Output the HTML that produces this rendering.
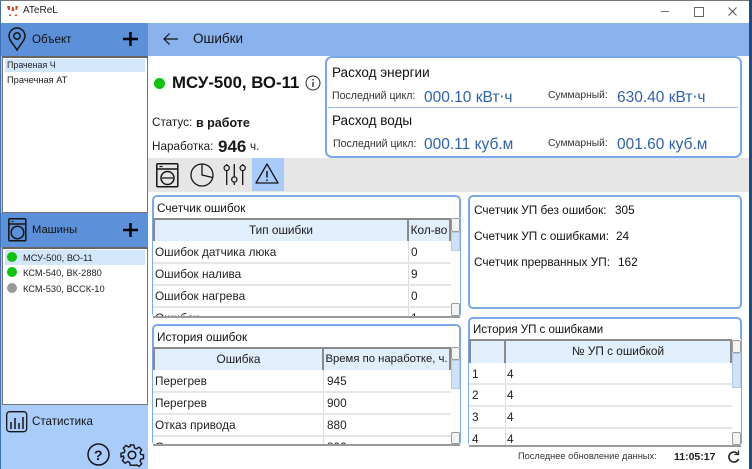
<!DOCTYPE html>
<html><head><meta charset="utf-8"><style>
html,body{margin:0;padding:0;width:752px;height:469px;overflow:hidden;background:#fff}
body{position:relative;font-family:"Liberation Sans",sans-serif;color:#1a1a1a}
.a{position:absolute}
.t{position:absolute;white-space:nowrap;line-height:1}
.box{position:absolute;box-sizing:border-box;border:2px solid #7ba8ea;border-radius:5px;background:#fff}
.th{position:absolute;box-sizing:border-box;background:#e1eefc;border-top:2px solid #8a8a8a;border-right:2px solid #8a8a8a;text-align:center;font-size:11.800px;line-height:21px;white-space:nowrap}
.hl{position:absolute;height:2px;background:#e6e6e6}
.vl{position:absolute;width:1px;background:#dcdcdc}
.c{position:absolute;font-size:11.800px;line-height:1;white-space:nowrap;color:#222}
.sb{position:absolute;width:9px;box-sizing:border-box;border:1px solid #9a9a9a;border-radius:2px;background:#f4f4f4}
.sbt{position:absolute;width:9px;background:#cfe2fa;border:1px solid #b5c9e0;box-sizing:border-box}
.blue{color:#2f62ad;font-size:15.500px}
.lab{font-size:10.600px;color:#333}
.l{font-size:11.800px;color:#111}
.m{font-size:9.300px;color:#222}
.h{font-size:11.600px;color:#111}
svg{position:absolute;overflow:visible}
</style></head><body>
<div class="a" style="left:0;top:0;width:752px;height:1px;background:#777"></div>
<div class="a" style="left:0;top:0;width:1px;height:469px;background:#3f6fb5"></div>
<div class="a" style="right:0;top:0;width:3px;height:469px;background:#1f4a85"></div>
<!-- title bar -->
<svg style="left:7px;top:5px" width="12" height="12"><path d="M0 1h3v4H1zM8.500 1H11l-1 4H8.500zM5 2h1.500l1 4h-3zM2 9.500h2V11H2zM8 9.500h2V11H8z" fill="#d5492a"/></svg>
<div class="t" style="left:23px;top:6px;font-size:10px;color:#222">ATeReL</div>
<div class="a" style="left:661px;top:11px;width:8px;height:1px;background:#777"></div>
<div class="a" style="left:694px;top:7px;width:8px;height:8px;border:1px solid #666"></div>
<svg style="left:728px;top:7px" width="9" height="9"><path d="M.5.5l8 8M8.500.5l-8 8" stroke="#555" stroke-width="1"/></svg>
<!-- headers -->
<div class="a" style="left:1px;top:23px;width:147px;height:33px;background:#5c90d8"></div>
<div class="a" style="left:148px;top:23px;width:601px;height:33px;background:#8ab3ee"></div>
<svg style="left:8px;top:28px" width="18" height="23" fill="none" stroke="#151515" stroke-width="1.500"><path d="M9 22C5.500 16 1 12.500 1 8a8 8 0 0 1 16 0c0 4.500-4.500 8-8 14z"/><circle cx="9" cy="8" r="3.200"/></svg>
<div class="t h" style="left:32px;top:34px">Объект</div>
<svg style="left:123px;top:32px" width="16" height="15"><path d="M7.500 0v14M0 7h15" stroke="#000" stroke-width="2.500"/></svg>
<svg style="left:163px;top:32px" width="16" height="14" fill="none" stroke="#111" stroke-width="1.200"><path d="M1 7h14M6.500 1.500L1 7l5.500 5.500"/></svg>
<div class="t" style="left:193px;top:32px;font-size:13.500px;color:#111">Ошибки</div>
<!-- left sidebar -->
<div class="a" style="left:1px;top:56px;width:147px;height:413px;background:#aaccfb"></div>
<div class="a" style="box-sizing:border-box;left:2px;top:56px;width:146px;height:157px;background:#fff;border:1px solid #777;border-top:2px solid #666"></div>
<div class="a" style="left:5px;top:59px;width:140px;height:13px;background:#d2e6fc"></div>
<div class="t m" style="left:7px;top:61px;font-size:8.900px">Праченая Ч</div>
<div class="t m" style="left:7px;top:76px">Прачечная АТ</div>
<div class="a" style="left:1px;top:213px;width:147px;height:34px;background:#5c90d8"></div>
<svg style="left:8px;top:218px" width="19" height="24" fill="none" stroke="#151515" stroke-width="1.500"><rect x=".8" y=".8" width="17" height="22" rx="1"/><path d="M1 6h17"/><circle cx="9.500" cy="14.500" r="6.300"/><path d="M3.500 3.500h2" stroke-width="1"/></svg>
<div class="t h" style="left:32px;top:225px;font-size:11.200px">Машины</div>
<svg style="left:123px;top:223px" width="16" height="15"><path d="M7.500 0v14M0 7h15" stroke="#000" stroke-width="2.500"/></svg>
<div class="a" style="box-sizing:border-box;left:2px;top:247px;width:146px;height:158px;background:#fff;border:1px solid #777;border-top:2px solid #666"></div>
<div class="a" style="left:5px;top:250px;width:140px;height:15px;background:#d2e6fc"></div>
<div class="a" style="left:7px;top:252px;width:10px;height:10px;border-radius:50%;background:#0cc40c"></div>
<div class="a" style="left:7px;top:267px;width:10px;height:10px;border-radius:50%;background:#0cc40c"></div>
<div class="a" style="left:7px;top:283px;width:10px;height:10px;border-radius:50%;background:#999"></div>
<div class="t m" style="left:23px;top:254px">МСУ-500, ВО-11</div>
<div class="t m" style="left:23px;top:269px">КСМ-540, ВК-2880</div>
<div class="t m" style="left:23px;top:285px">КСМ-530, ВССК-10</div>
<svg style="left:6px;top:411px" width="22" height="21" fill="none" stroke="#151515" stroke-width="1.300"><rect x=".7" y=".7" width="20" height="20" rx="3"/><path d="M5 11v7M9 7v11M13 12v6M17 6v12" stroke-width="1.500"/></svg>
<div class="t h" style="left:32px;top:416px">Статистика</div>
<svg style="left:87px;top:443px" width="23" height="23" fill="none" stroke="#151515" stroke-width="1.500"><circle cx="11.500" cy="11.500" r="10.500"/></svg>
<div class="t" style="left:94px;top:448px;font-size:14px;font-weight:bold">?</div>
<svg style="left:120px;top:443px" width="24" height="24" fill="none" stroke="#151515" stroke-width="1.500"><circle cx="12" cy="12" r="3.800"/><path d="M10 1h4l.7 3.300 2 .9 2.900-1.800 2.900 2.900-1.800 2.900.8 2 3 .7v4l-3 .7-.8 2 1.800 2.900-2.900 2.900-2.900-1.800-2 .8L14 23h-4l-.7-3.100-2-.8-2.900 1.800-2.900-2.900 1.800-2.900-.8-2L0 14v-4l3.500-.7.8-2-1.800-2.900 2.900-2.900 2.900 1.800 2-.9z" transform="translate(1 1) scale(.92)"/></svg>
<!-- machine head -->
<div class="a" style="left:154px;top:78px;width:11px;height:11px;border-radius:50%;background:#0cc40c"></div>
<div class="t" style="left:172px;top:75px;font-size:16.800px;font-weight:bold;color:#111">МСУ-500, ВО-11</div>
<svg style="left:305px;top:75px" width="16" height="16" fill="none" stroke="#222"><circle cx="8" cy="8" r="7"/><path d="M8 7v5M8 4v1.500" stroke-width="1.300"/></svg>
<div class="t" style="left:152px;top:117px;font-size:11.700px">Статус:</div>
<div class="t" style="left:196px;top:117px;font-size:12.500px;font-weight:bold">в работе</div>
<div class="t" style="left:152px;top:141px;font-size:11.700px">Наработка:</div>
<div class="t" style="left:218px;top:138px;font-size:17px;font-weight:bold">946</div>
<div class="t" style="left:250px;top:141px;font-size:11.700px">ч.</div>
<!-- energy box -->
<div class="box" style="left:325px;top:56px;width:417px;height:102px;border-radius:7px"></div>
<div class="a" style="left:328px;top:107px;width:410px;height:1px;background:#9dbfee"></div>
<div class="t" style="left:332px;top:66px;font-size:13.500px;color:#111">Расход энергии</div>
<div class="t" style="left:332px;top:114px;font-size:13.500px;color:#111">Расход воды</div>
<div class="t lab" style="left:332px;top:91px">Последний цикл:</div>
<div class="t lab" style="left:333px;top:139px">Последний цикл:</div>
<div class="t lab" style="left:548px;top:91px;font-size:10.300px">Суммарный:</div>
<div class="t lab" style="left:548px;top:139px;font-size:10.300px">Суммарный:</div>
<div class="t blue" style="left:424px;top:90px">000.10 кВт⋅ч</div>
<div class="t blue" style="left:617px;top:90px">630.40 кВт⋅ч</div>
<div class="t blue" style="left:424px;top:137px">000.11 куб.м</div>
<div class="t blue" style="left:617px;top:137px">001.60 куб.м</div>
<!-- tabs -->
<div class="a" style="left:148px;top:158px;width:601px;height:34px;background:#e6e6e6"></div>
<div class="a" style="left:252px;top:158px;width:32px;height:33px;background:#a9cbf9"></div>
<svg style="left:156px;top:163px" width="23" height="25" fill="none" stroke="#151515" stroke-width="1.500"><rect x=".8" y=".8" width="21" height="23" rx="1"/><path d="M1 6h21"/><circle cx="11.500" cy="15" r="6.500"/><path d="M6 15h11M3.500 3.500h3" stroke-width="1.200"/></svg>
<svg style="left:190px;top:163px" width="24" height="24" fill="none" stroke="#151515" stroke-width="1.300"><circle cx="12" cy="12" r="11"/><path d="M12 1v11l10.500 2.500"/></svg>
<svg style="left:222px;top:163px" width="26" height="24" fill="none" stroke="#151515" stroke-width="1.300"><path d="M4.700 1v1.500M4.700 8v14M12.300 1v12.500M12.300 19v3M20.700 1v1.500M20.700 8v14"/><circle cx="4.700" cy="5" r="2.600"/><circle cx="12.300" cy="16.500" r="2.600"/><circle cx="20.700" cy="5" r="2.600"/></svg>
<svg style="left:255px;top:163px" width="24" height="21" fill="none" stroke="#151515" stroke-width="1.300"><path d="M12 1L1 20h22z" stroke-linejoin="round"/><path d="M12 8v6.500M12 16.500v1.500" stroke-width="1.500"/></svg>
<!-- counter box -->
<div class="box" style="left:152px;top:195px;width:309px;height:123px"></div>
<div class="t l" style="left:157px;top:203px">Счетчик ошибок</div>
<div class="a" style="left:153px;top:218px;width:307px;height:99px;overflow:hidden;background:#fff">
<div class="th" style="left:0;top:0;width:256px;height:23px;border-left:2px solid #8a8a8a">Тип ошибки</div>
<div class="th" style="left:256px;top:0;width:42px;height:23px">Кол-во</div>
<div class="vl" style="left:255px;top:23px;height:76px"></div>
<div class="hl" style="left:0;top:44px;width:298px"></div>
<div class="hl" style="left:0;top:66px;width:298px"></div>
<div class="hl" style="left:0;top:88px;width:298px"></div>
<div class="c" style="left:2px;top:29px">Ошибок датчика люка</div><div class="c" style="left:258px;top:29px">0</div>
<div class="c" style="left:2px;top:51px">Ошибок налива</div><div class="c" style="left:258px;top:51px">9</div>
<div class="c" style="left:2px;top:73px">Ошибок нагрева</div><div class="c" style="left:258px;top:73px">0</div>
<div class="c" style="left:2px;top:95px">Ошибок</div><div class="c" style="left:258px;top:95px">1</div>
<div class="a" style="left:298px;top:0;width:9px;height:99px;background:#fff"></div>
<div class="sb" style="left:298px;top:0;height:14px"></div>
<div class="sbt" style="left:298px;top:14px;height:19px"></div>
<div class="sb" style="left:298px;top:85px;height:13px"></div>
</div>
<div class="a" style="left:153px;top:316px;width:307px;height:2px;background:#9a9a9a"></div>
<!-- history box -->
<div class="box" style="left:152px;top:324px;width:309px;height:122px"></div>
<div class="t l" style="left:157px;top:332px">История ошибок</div>
<div class="a" style="left:153px;top:347px;width:307px;height:98px;overflow:hidden;background:#fff">
<div class="th" style="left:0;top:0;width:171px;height:23px;border-left:2px solid #8a8a8a">Ошибка</div>
<div class="th" style="left:171px;top:0;width:127px;height:23px;font-size:11.300px">Время по наработке, ч.</div>
<div class="vl" style="left:170px;top:23px;height:76px"></div>
<div class="hl" style="left:0;top:44px;width:298px"></div>
<div class="hl" style="left:0;top:66px;width:298px"></div>
<div class="hl" style="left:0;top:88px;width:298px"></div>
<div class="c" style="left:2px;top:29px">Перегрев</div><div class="c" style="left:174px;top:29px">945</div>
<div class="c" style="left:2px;top:51px">Перегрев</div><div class="c" style="left:174px;top:51px">900</div>
<div class="c" style="left:2px;top:73px">Отказ привода</div><div class="c" style="left:174px;top:73px">880</div>
<div class="c" style="left:2px;top:95px">Отказ</div><div class="c" style="left:174px;top:95px">800</div>
<div class="a" style="left:298px;top:0;width:9px;height:98px;background:#fff"></div>
<div class="sb" style="left:298px;top:0;height:13px"></div>
<div class="sbt" style="left:298px;top:13px;height:29px"></div>
<div class="sb" style="left:298px;top:85px;height:12px"></div>
</div>
<div class="a" style="left:153px;top:444px;width:307px;height:2px;background:#9a9a9a"></div>
<!-- stats box -->
<div class="box" style="left:468px;top:195px;width:274px;height:114px"></div>
<div class="t l" style="left:474px;top:205px">Счетчик УП без ошибок:</div><div class="t l" style="left:615px;top:205px">305</div>
<div class="t l" style="left:474px;top:231px">Счетчик УП с ошибками:</div><div class="t l" style="left:616px;top:231px">24</div>
<div class="t l" style="left:474px;top:257px">Счетчик прерванных УП:</div><div class="t l" style="left:618px;top:257px">162</div>
<!-- UP history -->
<div class="box" style="left:468px;top:317px;width:274px;height:130px"></div>
<div class="t l" style="left:473px;top:325px;font-size:11.500px">История УП с ошибками</div>
<div class="a" style="left:469px;top:339px;width:272px;height:107px;overflow:hidden;background:#fff">
<div class="th" style="left:0;top:0;width:37px;height:24px;border-left:2px solid #8a8a8a"></div>
<div class="th" style="left:37px;top:0;width:226px;height:24px">№ УП с ошибкой</div>
<div class="vl" style="left:36px;top:24px;height:83px"></div>
<div class="hl" style="left:0;top:44px;width:263px"></div>
<div class="hl" style="left:0;top:66px;width:263px"></div>
<div class="hl" style="left:0;top:88px;width:263px"></div>
<div class="c" style="left:3px;top:30px">1</div><div class="c" style="left:38px;top:30px">4</div>
<div class="c" style="left:3px;top:51px">2</div><div class="c" style="left:38px;top:51px">4</div>
<div class="c" style="left:3px;top:73px">3</div><div class="c" style="left:38px;top:73px">4</div>
<div class="c" style="left:3px;top:95px">4</div><div class="c" style="left:38px;top:95px">4</div>
<div class="a" style="left:263px;top:0;width:9px;height:107px;background:#fff"></div>
<div class="sb" style="left:263px;top:1px;height:13px"></div>
<div class="sbt" style="left:263px;top:14px;height:35px"></div>
<div class="sb" style="left:263px;top:93px;height:13px"></div>
</div>
<div class="a" style="left:469px;top:445px;width:272px;height:2px;background:#9a9a9a"></div>
<!-- footer -->
<div class="t" style="left:518px;top:452px;font-size:9.250px;color:#333">Последнее обновление данных:</div>
<div class="t" style="left:674px;top:452px;font-size:10.500px;font-weight:bold;color:#222">11:05:17</div>
<svg style="left:727px;top:450px" width="13" height="14" fill="none" stroke="#222" stroke-width="1.600"><path d="M10.500 3.500A5 5 0 1 0 11.500 9"/><path d="M11.500.5v4h-4" stroke-width="1.300"/></svg>
</body></html>
